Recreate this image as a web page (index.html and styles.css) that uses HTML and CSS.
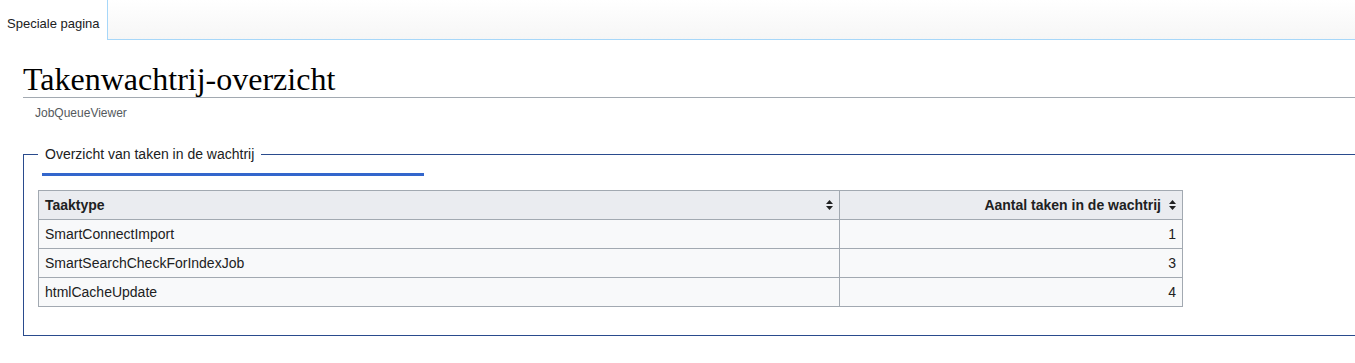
FILE: index.html
```html
<!DOCTYPE html>
<html lang="nl">
<head>
<meta charset="utf-8">
<title>Takenwachtrij-overzicht</title>
<link rel="stylesheet" href="styles.css">
</head>
<body>
<div class="tabbar">
  <div class="tab">Speciale pagina</div>
  <div class="tabfill"></div>
</div>
<main class="content">
  <h1 class="title">Takenwachtrij-overzicht</h1>
  <div class="subtitle">JobQueueViewer</div>
  <fieldset class="box">
    <legend class="legend">Overzicht van taken in de wachtrij</legend>
    <div class="bar"></div>
    <table class="grid">
      <thead>
        <tr>
          <th class="col-type"><span class="th-inner"><span>Taaktype</span><svg class="sort" viewBox="0 0 7 10" width="7" height="10"><path d="M3.5 0 L7 4 L0 4 Z M0 6 L7 6 L3.5 10 Z" fill="#202122"/></svg></span></th>
          <th class="col-count"><span class="th-inner end"><span>Aantal taken in de wachtrij</span><svg class="sort" viewBox="0 0 7 10" width="7" height="10"><path d="M3.5 0 L7 4 L0 4 Z M0 6 L7 6 L3.5 10 Z" fill="#202122"/></svg></span></th>
        </tr>
      </thead>
      <tbody>
        <tr><td>SmartConnectImport</td><td class="num">1</td></tr>
        <tr><td>SmartSearchCheckForIndexJob</td><td class="num">3</td></tr>
        <tr><td>htmlCacheUpdate</td><td class="num">4</td></tr>
      </tbody>
    </table>
  </fieldset>
</main>
</body>
</html>
```

FILE: styles.css
```css
html, body {
  margin: 0;
  padding: 0;
  background: #fff;
  overflow: hidden;
}
body {
  font-family: "Liberation Sans", Arial, sans-serif;
  color: #202122;
}
.tabbar {
  display: flex;
  height: 40px;
}
.tab {
  width: 107px;
  box-sizing: border-box;
  padding: 16px 0 0 7px;
  font-size: 13px;
  color: #202122;
  background: #fff;
}
.tabfill {
  flex: 1;
  border-left: 1px solid #a7d7f9;
  border-bottom: 1px solid #a7d7f9;
  background: linear-gradient(to bottom, #ffffff 0%, #f6f6f6 100%);
}
.content {
  padding: 0 0 0 23px;
}
.title {
  margin: 22px 0 0 0;
  font-family: "Liberation Serif", "Times New Roman", serif;
  font-weight: normal;
  font-size: 32px;
  line-height: 35px;
  border-bottom: 1px solid #a2a9b1;
  padding-bottom: 0;
  color: #000;
}
.subtitle {
  margin: 7px 0 0 12px;
  font-size: 12px;
  color: #54595d;
  line-height: 16px;
}
.box {
  margin: 25px 0 0 0;
  padding: 0 0 28px 14px;
  border: 1px solid #2a4b8d;
  border-right: none;
  min-width: 0;
}
.legend {
  font-size: 14px;
  padding: 0 7px;
  margin-left: 0;
  line-height: 16px;
}
.bar {
  width: 382px;
  height: 3px;
  background: #3366cc;
  margin: 11px 0 14px 4px;
}
.grid {
  border-collapse: collapse;
  width: 1145px;
  font-size: 14px;
  background: #f8f9fa;
  border: 1px solid #a2a9b1;
}
.grid th, .grid td {
  border: 1px solid #a2a9b1;
  height: 29px;
  padding: 0 6px;
  box-sizing: border-box;
}
.grid th {
  background: #eaecf0;
  font-weight: bold;
  text-align: left;
}
.col-type { width: 801px; }
.th-inner {
  display: flex;
  align-items: center;
  justify-content: space-between;
}
.th-inner.end {
  justify-content: flex-end;
  gap: 8px;
}
.sort {
  display: block;
}
.num {
  text-align: right;
}
```
